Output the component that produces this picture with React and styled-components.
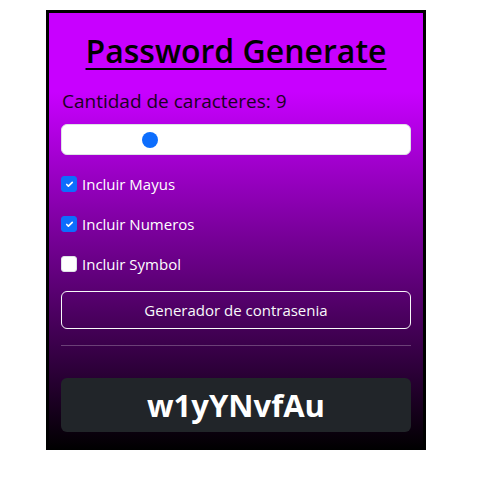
import styled, { createGlobalStyle } from "styled-components";

const Global = createGlobalStyle`
  body {
    margin: 0;
    background: #fff;
    font-family: "Open Sans", "Noto Sans", sans-serif;
  }
`;

const Page = styled.div`
  padding: 10px 0 0 46px;
`;

const Card = styled.div`
  width: 380px;
  height: 440px;
  box-sizing: border-box;
  border: 3px solid #000;
  border-bottom: 0;
  padding: 12px 12px 0;
  background: linear-gradient(180deg, #c800ff 18%, #000 100%);
  display: flex;
  flex-direction: column;
`;

const Title = styled.h1`
  margin: 2px 0 0;
  text-align: center;
  font-size: 32px;
  font-weight: 600;
  line-height: 48px;
  text-decoration: underline;
  text-decoration-thickness: 2px;
  text-underline-offset: 5px;
  color: #000;
`;

const Counter = styled.p`
  margin: 11px 0 0 1px;
  font-size: 19px;
  line-height: 30px;
  color: #1a0022;
`;

const Range = styled.input`
  appearance: none;
  margin: 8px 0 0;
  width: 350px;
  height: 31px;
  box-sizing: border-box;
  padding: 0 12px;
  background: #fff;
  border: 1px solid #dee2e6;
  border-radius: 6px;
  &::-webkit-slider-runnable-track {
    height: 16px;
    background: transparent;
  }
  &::-webkit-slider-thumb {
    appearance: none;
    width: 16px;
    height: 16px;
    border-radius: 50%;
    background: #0d6efd;
  }
`;

const Options = styled.div`
  display: flex;
  flex-direction: column;
  gap: 18px;
  margin-top: 18px;
`;

const Option = styled.label`
  display: flex;
  align-items: center;
  gap: 5px;
  color: #fff;
  font-size: 15px;
  line-height: 22px;
`;

const Box = styled.span`
  width: 16px;
  height: 16px;
  box-sizing: border-box;
  border-radius: 3px;
  display: flex;
  align-items: center;
  justify-content: center;
  background: ${(p) => (p.checked ? "#0d6efd" : "#fff")};
  border: 1px solid ${(p) => (p.checked ? "#0d6efd" : "#dee2e6")};
`;

const Button = styled.button`
  margin-top: 16px;
  height: 38px;
  background: transparent;
  border: 1px solid #f8f9fa;
  border-radius: 6px;
  color: #f8f9fa;
  font-family: inherit;
  font-size: 15px;
`;

const Rule = styled.hr`
  margin: 16px 0 0;
  border: 0;
  border-top: 1px solid rgba(255, 255, 255, 0.25);
`;

const Output = styled.div`
  margin-top: 32px;
  height: 54px;
  border-radius: 6px;
  background: #212529;
  color: #fff;
  display: flex;
  align-items: center;
  justify-content: center;
  font-size: 31px;
  font-weight: 700;
`;

function Check({ label, checked }) {
  return (
    <Option>
      <Box checked={checked}>
        {checked && (
          <svg width="11" height="11" viewBox="0 0 20 20">
            <path
              d="M5 10l3 3 7-7"
              fill="none"
              stroke="#fff"
              strokeWidth="3"
              strokeLinecap="round"
              strokeLinejoin="round"
            />
          </svg>
        )}
      </Box>
      {label}
    </Option>
  );
}

export default function App() {
  return (
    <Page>
      <Global />
      <Card>
        <Title>Password Generate</Title>
        <Counter>Cantidad de caracteres: 9</Counter>
        <Range type="range" min="1" max="37" defaultValue="9" />
        <Options>
          <Check label="Incluir Mayus" checked />
          <Check label="Incluir Numeros" checked />
          <Check label="Incluir Symbol" />
        </Options>
        <Button>Generador de contrasenia</Button>
        <Rule />
        <Output>w1yYNvfAu</Output>
      </Card>
    </Page>
  );
}
